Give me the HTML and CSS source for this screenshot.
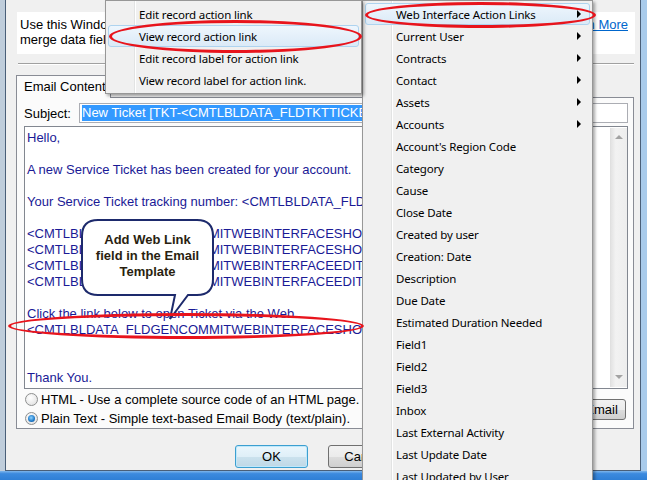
FILE: index.html
```html
<!DOCTYPE html>
<html lang="en">
<head>
    <meta charset="UTF-8">
    <title>Email Template</title>
    <link rel="stylesheet" href="styles.css">
</head>
<body>
<div class="screen">
    <div class="dialog">
        <div class="intro">
            <div class="intro-text">
                <p>Use this Window to define the subject and the body of the Email Template. Right-click to insert</p>
                <p>merge data fields of the record into the subject or the body of the message.</p>
            </div>
            <a href="#" class="learn">Learn More</a>
        </div>
        <div class="sep"></div>

        <div class="tabs">
            <div class="tab-head">
                <span class="tab">Email Content</span>
            </div>
            <div class="tab-page">
                <div class="subject-row">
                    <label>Subject:</label>
                    <div class="input"><span class="sel">New Ticket [TKT-&lt;CMTLBLDATA_FLDTKTTICKETNUMBER&gt;]</span></div>
                </div>
                <div class="body-box">
                    <div class="body-text">
                        <p>Hello,</p>
                        <p>&nbsp;</p>
                        <p>A new Service Ticket has been created for your account.</p>
                        <p>&nbsp;</p>
                        <p>Your Service Ticket tracking number: &lt;CMTLBLDATA_FLDTKTTICKETNUMBER&gt;</p>
                        <p>&nbsp;</p>
                        <p>&lt;CMTLBLDATA_FLDGENCOMMITWEBINTERFACESHOWRECORDLINK&gt;</p>
                        <p>&lt;CMTLBLDATA_FLDGENCOMMITWEBINTERFACESHOWRECORDLABEL&gt;</p>
                        <p>&lt;CMTLBLDATA_FLDGENCOMMITWEBINTERFACEEDITRECORDLINK&gt;</p>
                        <p>&lt;CMTLBLDATA_FLDGENCOMMITWEBINTERFACEEDITRECORDLABEL&gt;</p>
                        <p>&nbsp;</p>
                        <p>Click the link below to open Ticket via the Web.</p>
                        <p>&lt;CMTLBLDATA_FLDGENCOMMITWEBINTERFACESHOWRECORDLINK&gt;</p>
                        <p>&nbsp;</p>
                        <p>&nbsp;</p>
                        <p>Thank You.</p>
                    </div>
                    <div class="vscroll">
                        <span class="arr up"></span>
                        <span class="arr down"></span>
                    </div>
                </div>
                <div class="format-row">
                    <div class="radios">
                        <div class="radio-line"><span class="radio"></span>HTML - Use a complete source code of an HTML page.</div>
                        <div class="radio-line"><span class="radio on"></span>Plain Text - Simple text-based Email Body (text/plain).</div>
                    </div>
                    <button class="btn">Send Test Email</button>
                </div>
            </div>
        </div>

        <div class="buttons">
            <button class="btn default">OK</button>
            <button class="btn">Cancel</button>
        </div>
    </div>
    <div class="frame-bottom"></div>

    <!-- annotation bubble -->
    <div class="callout">
        <svg width="140" height="104" viewBox="0 0 140 104">
            <path d="M18,2 H117 Q133,2 133,18 V61 Q133,77 117,77 H108 L90,101 L95,77 H18 Q2,77 2,61 V18 Q2,2 18,2 Z" fill="#fff" stroke="#1d2a6c" stroke-width="2"/>
        </svg>
        <div class="callout-text">Add Web Link<br>field in the Email<br>Template</div>
    </div>
    <div class="ring ring-body"></div>

    <!-- context menus -->
    <div class="menu menu-fields">
        <div class="item hot">Web Interface Action Links<span class="sub"></span></div>
        <div class="item">Current User<span class="sub"></span></div>
        <div class="item">Contracts<span class="sub"></span></div>
        <div class="item">Contact<span class="sub"></span></div>
        <div class="item">Assets<span class="sub"></span></div>
        <div class="item">Accounts<span class="sub"></span></div>
        <div class="item">Account's Region Code</div>
        <div class="item">Category</div>
        <div class="item">Cause</div>
        <div class="item">Close Date</div>
        <div class="item">Created by user</div>
        <div class="item">Creation: Date</div>
        <div class="item">Description</div>
        <div class="item">Due Date</div>
        <div class="item">Estimated Duration Needed</div>
        <div class="item">Field1</div>
        <div class="item">Field2</div>
        <div class="item">Field3</div>
        <div class="item">Inbox</div>
        <div class="item">Last External Activity</div>
        <div class="item">Last Update Date</div>
        <div class="item">Last Updated by User</div>
    </div>
    <div class="menu menu-links">
        <div class="item">Edit record action link</div>
        <div class="item hot">View record action link</div>
        <div class="item">Edit record label for action link</div>
        <div class="item">View record label for action link.</div>
    </div>
    <div class="ring ring-view"></div>
    <div class="ring ring-web"></div>
</div>
</body>
</html>
```
FILE: styles.css
```css
* {
    box-sizing: border-box;
}
body {
    margin: 0;
    font-family: "Liberation Sans", Arial, sans-serif;
    font-size: 13px;
    color: #000;
}
p {
    margin: 0;
}
.screen {
    position: relative;
    width: 647px;
    height: 480px;
    overflow: hidden;
    background: linear-gradient(to right, #bfcddb 0 5px, #f0f0f0 5px 640px, #a9cbeb 640px);
}
.dialog {
    margin-left: 5px;
    width: 636px;
    height: 471px;
    background: #f0f0f0;
    border: 1px solid #4a5f78;
    border-top: none;
    padding-top: 12px;
}
.frame-bottom {
    height: 9px;
    background: linear-gradient(#7fb6ec, #3c8ade 30%, #2f7fd6);
}

/* intro */
.intro {
    display: flex;
    margin: 0 5px 0 11px;
    height: 42px;
    background: #fff;
    padding: 5px 7px 0 3px;
    line-height: 15px;
}
.intro-text {
    flex: 1;
    overflow: hidden;
    white-space: nowrap;
}
.learn {
    color: #0066cc;
    margin-left: 8px;
}
.sep {
    margin: 9px 6px 0 12px;
    height: 2px;
    border-top: 1px solid #a0a0a0;
    border-bottom: 1px solid #fff;
}

/* tab box */
.tabs {
    margin: 10px 6px 0 10px;
}
.tab-head {
    display: flex;
    height: 22px;
}
.tab {
    width: 95px;
    height: 23px;
    padding: 3px 0 0 7px;
    background: #fbfbfb;
    border: 1px solid #898c95;
    border-bottom: none;
    position: relative;
    z-index: 1;
}
.tab-page {
    height: 332px;
    background: #fbfbfb;
    border: 1px solid #898c95;
    padding: 5px 5px 0 7px;
}
.subject-row {
    display: flex;
    align-items: center;
    height: 20px;
}
.subject-row label {
    width: 55px;
}
.input {
    flex: 1;
    height: 20px;
    background: #fff;
    border: 1px solid #abadb3;
    padding: 1px 0 0 2px;
    overflow: hidden;
    white-space: nowrap;
}
.sel {
    background: #3399ff;
    color: #fff;
    line-height: 16px;
    display: inline-block;
}
.body-box {
    display: flex;
    margin-top: 3px;
    height: 263px;
    background: #fff;
    border: 1px solid #828790;
}
.body-text {
    flex: 1;
    overflow: hidden;
    white-space: nowrap;
    padding: 3px 0 0 2px;
    line-height: 16px;
    color: #1a1a96;
}
.vscroll {
    width: 17px;
    margin: 1px 0;
    background: linear-gradient(to right, #e3e3e3, #f2f2f2 30%, #ededed);
    border-left: 1px solid #e0e0e0;
    display: flex;
    flex-direction: column;
    justify-content: space-between;
    align-items: center;
    padding: 7px 0 8px;
}
.arr {
    width: 0;
    height: 0;
    border-left: 4px solid transparent;
    border-right: 4px solid transparent;
}
.arr.up {
    border-bottom: 4px solid #a3a3a3;
}
.arr.down {
    border-top: 4px solid #a3a3a3;
}
.format-row {
    display: flex;
    justify-content: space-between;
    align-items: center;
    margin-top: 1px;
}
.radio-line {
    display: flex;
    align-items: center;
    height: 19px;
}
.radio {
    width: 13px;
    height: 13px;
    border-radius: 50%;
    border: 1px solid #8e8f8f;
    background: radial-gradient(circle at 40% 35%, #fff, #dcdcdc);
    margin: 0 3px 0 1px;
    display: flex;
    align-items: center;
    justify-content: center;
}
.radio.on::after {
    content: "";
    width: 7px;
    height: 7px;
    border-radius: 50%;
    background: radial-gradient(circle at 45% 40%, #8fd3ff, #1c78c8 60%, #0b3f7a);
}
.btn {
    font-family: "Liberation Sans", Arial, sans-serif;
    font-size: 13px;
    color: #000;
    width: 73px;
    height: 23px;
    border: 1px solid #707070;
    border-radius: 3px;
    background: linear-gradient(#f2f2f2, #ebebeb 50%, #dddddd 50%, #cfcfcf);
    padding: 0;
}
.format-row .btn {
    width: 110px;
    height: 21px;
    margin-right: 2px;
}
.btn.default {
    border-color: #3c9fd0;
    background: linear-gradient(#eaf6fc, #dfeff8 50%, #cbe2ee 50%, #bfd8e6);
    box-shadow: inset 0 0 0 1px #bfe8fb;
}
.buttons {
    display: flex;
    gap: 20px;
    margin-top: 16px;
    padding-left: 229px;
}

/* menus */
.menu {
    position: absolute;
    top: 0;
    background: linear-gradient(to right, #f0f0f0 28px, #e2e3e3 28px 29px, #fff 29px 30px, #f0f0f0 30px);
    border: 1px solid #979797;
    padding: 2px;
    box-shadow: 2px 2px 3px rgba(0, 0, 0, 0.35);
    font-family: "Noto Sans", "Open Sans", sans-serif;
    font-size: 11.5px;
    letter-spacing: -0.15px;
    color: #000;
}
.menu-fields {
    left: 362px;
    width: 231px;
    height: 500px;
}
.menu-links {
    left: 105px;
    width: 257px;
    z-index: 2;
}
.item {
    position: relative;
    height: 22px;
    line-height: 21px;
    padding-left: 30px;
    white-space: nowrap;
    border: 1px solid transparent;
    border-radius: 3px;
}
.item.hot {
    border-color: #aed3ef;
    background: linear-gradient(#eef6fd, #dbeaf7);
}
.sub {
    position: absolute;
    right: 8px;
    top: 6px;
    border-top: 4px solid transparent;
    border-bottom: 4px solid transparent;
    border-left: 4px solid #000;
}

/* annotations */
.callout {
    position: absolute;
    left: 80px;
    top: 218px;
    width: 140px;
    height: 104px;
}
.callout svg {
    position: absolute;
    left: 0;
    top: 0;
}
.callout-text {
    position: relative;
    width: 135px;
    padding-top: 14px;
    text-align: center;
    font-weight: bold;
    line-height: 16px;
    color: #2a1f10;
}
.ring {
    position: absolute;
    border: 3px solid #e8141c;
    border-radius: 50%;
    z-index: 3;
}
.ring-view {
    left: 109px;
    top: 20px;
    width: 253px;
    height: 33px;
}
.ring-web {
    left: 365px;
    top: 2px;
    width: 231px;
    height: 26px;
}
.ring-body {
    left: 8px;
    top: 313px;
    width: 356px;
    height: 26px;
}
```
